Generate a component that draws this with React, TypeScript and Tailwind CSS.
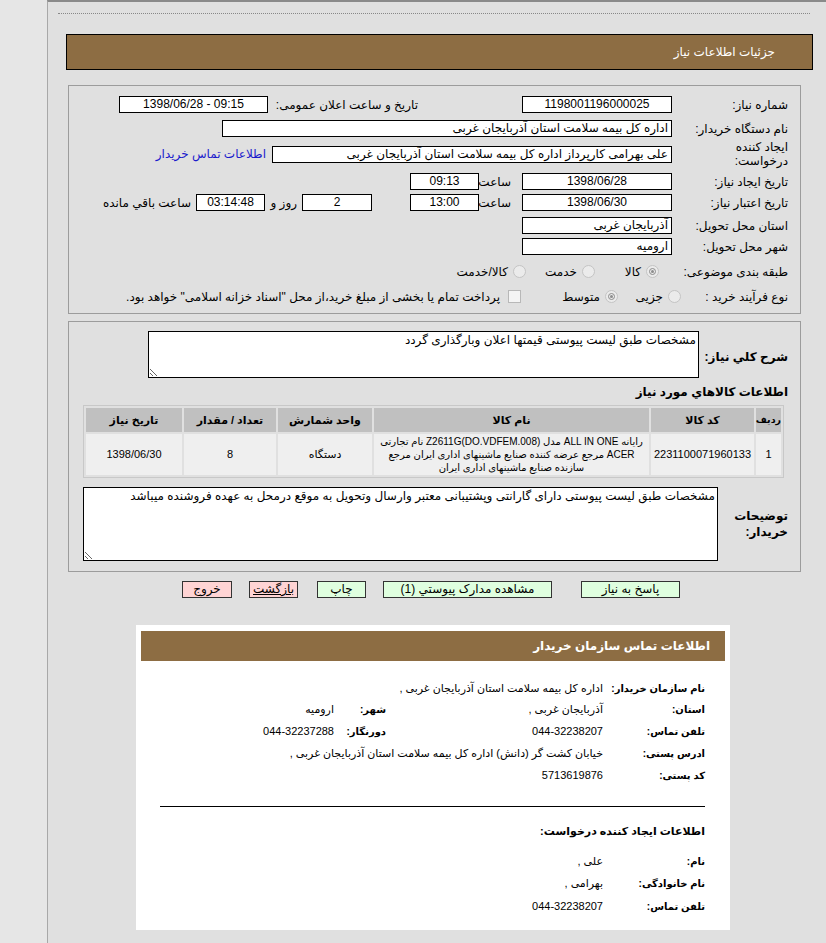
import React from 'react';

const Box: React.FC<{ className?: string; dir?: string; children?: React.ReactNode }> = ({ className = '', dir, children }) => (
  <div dir={dir} className={`h-[17px] shrink-0 bg-white border border-black text-[12px] leading-[15px] px-[3px] whitespace-nowrap overflow-hidden ${className}`}>
    {children}
  </div>
);

const Radio: React.FC<{ checked?: boolean }> = ({ checked }) => (
  <span className="w-[13px] h-[13px] shrink-0 rounded-full border border-[#c4c4c4] bg-[#ebebeb] flex items-center justify-center">
    {checked && (
      <span className="w-[7px] h-[7px] rounded-full border border-[#8c8c8c] flex items-center justify-center">
        <span className="w-[3px] h-[3px] rounded-full bg-[#8c8c8c]" />
      </span>
    )}
  </span>
);

const Btn: React.FC<{ className?: string; children: React.ReactNode }> = ({ className = '', children }) => (
  <div className={`h-[17px] shrink-0 border border-[#333] text-[12px] leading-[15px] text-center whitespace-nowrap ${className}`}>{children}</div>
);

const CardRow: React.FC<{ className?: string; children: React.ReactNode }> = ({ className = '', children }) => (
  <div className={`flex items-center h-[18px] whitespace-nowrap ${className}`}>{children}</div>
);

const CardLabel: React.FC<{ children: React.ReactNode }> = ({ children }) => (
  <span className="w-[102px] shrink-0 font-bold text-[10px]">{children}</span>
);

const App: React.FC = () => {
  return (
    <div className="flex min-h-[943px] font-['Liberation_Sans','DejaVu_Sans',sans-serif] text-black">
      {/* left strip */}
      <div className="w-[47px] shrink-0 bg-[#e6e6e6]" />

      <div className="flex-1 bg-[#e0e0e0] border-l border-t-2 border-l-[#a8a8a8] border-t-[#8a8a8a]">
        {/* dotted rule */}
        <div className="mt-[11px] ml-[10px] mr-[16px] border-t border-dotted border-[#888]" />

        {/* page title */}
        <div dir="rtl" className="mt-[20px] ml-[18px] w-[747px] h-[36px] bg-[#8d6d43] border border-black flex items-center pr-[37px] text-white text-[12px]">
          جزئیات اطلاعات نیاز
        </div>

        {/* main form */}
        <div dir="rtl" className="mt-[15px] ml-[20px] w-[733px] h-[229px] border border-[#9c9c9c] pr-[12px] text-[12px]">
          <div className="flex items-center h-[17px] mt-[10px]">
            <span className="w-[116px] shrink-0">شماره نیاز:</span>
            <Box className="w-[150px] text-center">1198001196000025</Box>
            <span className="mr-[104px] w-[150px] shrink-0">تاریخ و ساعت اعلان عمومی:</span>
            <Box dir="rtl" className="w-[149px] text-center">
              <span dir="ltr">1398/06/28 - 09:15</span>
            </Box>
          </div>

          <div className="flex items-center h-[17px] mt-[7px]">
            <span className="w-[116px] shrink-0">نام دستگاه خریدار:</span>
            <Box className="w-[450px]">اداره کل بیمه سلامت استان آذربایجان غربی</Box>
          </div>

          <div className="flex items-center h-[28px] mt-[3px]">
            <span className="w-[116px] shrink-0 leading-[14px]">
              ایجاد کننده
              <br />
              درخواست:
            </span>
            <Box className="w-[400px]">علی بهرامی کارپرداز اداره کل بیمه سلامت استان آذربایجان غربی</Box>
            <a className="mr-[6px] text-[#1a1acc]">اطلاعات تماس خریدار</a>
          </div>

          <div className="flex items-center h-[17px] mt-[5px]">
            <span className="w-[116px] shrink-0">تاریخ ایجاد نیاز:</span>
            <Box className="w-[150px] text-center">1398/06/28</Box>
            <span className="mr-[11px] w-[32px] shrink-0">ساعت</span>
            <Box className="w-[69px] text-center">09:13</Box>
          </div>

          <div className="flex items-center h-[17px] mt-[4px]">
            <span className="w-[116px] shrink-0">تاریخ اعتبار نیاز:</span>
            <Box className="w-[150px] text-center">1398/06/30</Box>
            <span className="mr-[11px] w-[32px] shrink-0">ساعت</span>
            <Box className="w-[69px] text-center">13:00</Box>
            <Box className="mr-[38px] w-[70px] text-center">2</Box>
            <span className="mr-[5px] w-[32px] shrink-0">روز و</span>
            <Box className="w-[69px] text-center bg-[#efeec8] border-[#555]">03:14:48</Box>
            <span className="mr-[5px]">ساعت باقي مانده</span>
          </div>

          <div className="flex items-center h-[17px] mt-[6px]">
            <span className="w-[116px] shrink-0">استان محل تحویل:</span>
            <Box className="w-[150px]">آذربایجان غربی</Box>
          </div>

          <div className="flex items-center h-[17px] mt-[4px]">
            <span className="w-[116px] shrink-0">شهر محل تحویل:</span>
            <Box className="w-[150px]">ارومیه</Box>
          </div>

          <div className="flex items-center h-[17px] mt-[8px]">
            <span className="w-[116px] shrink-0">طبقه بندی موضوعی:</span>
            <div className="w-[77px] shrink-0 flex items-center">
              <span className="mr-[13px]"><Radio checked /></span>
              <span className="mr-[5px]">کالا</span>
            </div>
            <div className="w-[69px] shrink-0 flex items-center">
              <Radio />
              <span className="mr-[5px]">خدمت</span>
            </div>
            <div className="flex items-center">
              <Radio />
              <span className="mr-[5px]">کالا/خدمت</span>
            </div>
          </div>

          <div className="flex items-center h-[17px] mt-[8px]">
            <span className="w-[107px] shrink-0">نوع فرآیند خرید :</span>
            <div className="w-[63px] shrink-0 flex items-center">
              <Radio />
              <span className="mr-[5px]">جزیی</span>
            </div>
            <div className="w-[97px] shrink-0 flex items-center">
              <Radio checked />
              <span className="mr-[5px]">متوسط</span>
            </div>
            <span className="w-[13px] h-[13px] shrink-0 border border-[#b8b8b8] bg-[#f4f4f4]" />
            <span className="mr-[8px] whitespace-nowrap">پرداخت تمام یا بخشی از مبلغ خرید،از محل "اسناد خزانه اسلامی" خواهد بود.</span>
          </div>
        </div>

        {/* description + items */}
        <div dir="rtl" className="mt-[7px] ml-[20px] w-[733px] h-[251px] border border-[#9c9c9c] pr-[12px] text-[12px]">
          <div className="flex items-center mt-[9px]">
            <span className="w-[89px] shrink-0 font-bold text-[12px] whitespace-nowrap pt-[4px]">شرح کلي نیاز:</span>
            <textarea
              readOnly
              dir="rtl"
              className="w-[551px] h-[47px] bg-white border border-black text-[12px] leading-[15px] px-[2px] py-[1px] outline-none resize"
              defaultValue="مشخصات طبق لیست پیوستی قیمتها اعلان وبارگذاری گردد"
            />
          </div>

          <div className="mt-[7px] h-[14px] leading-[14px] font-bold text-[12px]">اطلاعات کالاهاي مورد نیاز</div>

          <div className="mt-[6px] mr-[4px] w-[701px]">
            <table className="w-full table-fixed border border-[#c8c8c8] border-separate border-spacing-[2px] text-[11px]">
              <colgroup>
                <col className="w-[25px]" />
                <col className="w-[103px]" />
                <col className="w-[275px]" />
                <col className="w-[94px]" />
                <col className="w-[92px]" />
                <col className="w-[96px]" />
              </colgroup>
              <thead>
                <tr className="h-[24px] bg-[#c0c0c0] font-bold">
                  <th className="whitespace-nowrap text-[9.5px] tracking-[-0.3px]">ردیف</th>
                  <th>کد کالا</th>
                  <th>نام کالا</th>
                  <th>واحد شمارش</th>
                  <th>تعداد / مقدار</th>
                  <th>تاریخ نیاز</th>
                </tr>
              </thead>
              <tbody>
                <tr className="h-[41px] bg-[#efefef] text-center">
                  <td>1</td>
                  <td>2231100071960133</td>
                  <td className="leading-[13px] text-[10px]">
                    رایانه ALL IN ONE مدل Z2611G(DO.VDFEM.008) نام تجارتی ACER مرجع عرضه کننده صنایع ماشینهای اداری ایران مرجع سازنده صنایع ماشینهای اداری ایران
                  </td>
                  <td>دستگاه</td>
                  <td>8</td>
                  <td>1398/06/30</td>
                </tr>
              </tbody>
            </table>
          </div>

          <div className="flex items-center mt-[9px]">
            <span className="w-[70px] shrink-0 font-bold text-[12px] leading-[16px]">
              توضیحات
              <br />
              خریدار:
            </span>
            <textarea
              readOnly
              dir="rtl"
              className="w-[635px] h-[74px] bg-white border border-black text-[12px] leading-[15px] px-[2px] py-[1px] outline-none"
              defaultValue="مشخصات طبق لیست پیوستی دارای گارانتی وپشتیبانی معتبر وارسال وتحویل به موقع درمحل به عهده فروشنده میباشد"
            />
          </div>
        </div>

        {/* actions */}
        <div dir="rtl" className="mt-[9px] pr-[146px] flex items-center">
          <Btn className="w-[99px] bg-[#dfffdf]">پاسخ به نیاز</Btn>
          <Btn className="mr-[29px] w-[169px] bg-[#dfffdf]">مشاهده مدارک پیوستي (1)</Btn>
          <Btn className="mr-[17px] w-[49px] bg-[#dfffdf]">چاپ</Btn>
          <Btn className="mr-[19px] w-[49px] bg-[#ffd4d4] underline">بازگشت</Btn>
          <Btn className="mr-[17px] w-[50px] bg-[#ffd4d4]">خروج</Btn>
        </div>

        {/* buyer contact card */}
        <div dir="rtl" className="mt-[27px] ml-[88px] w-[594px] h-[305px] bg-white pt-[6px] text-[11px]">
          <div className="mx-[5px] h-[30px] bg-[#8d6d43] flex items-center pr-[15px] text-white font-bold text-[12px]">
            اطلاعات تماس سازمان خریدار
          </div>

          <div className="pr-[25px]">
            <CardRow className="mt-[18px]">
              <CardLabel>نام سازمان خریدار:</CardLabel>
              <span>اداره کل بیمه سلامت استان آذربایجان غربی ,</span>
            </CardRow>
            <CardRow className="mt-[3px]">
              <CardLabel>استان:</CardLabel>
              <span className="w-[217px] shrink-0">آذربایجان غربی ,</span>
              <span className="w-[52px] shrink-0 font-bold text-[10px]">شهر:</span>
              <span>ارومیه</span>
            </CardRow>
            <CardRow className="mt-[4px]">
              <CardLabel>تلفن تماس:</CardLabel>
              <span className="w-[217px] shrink-0">044-32238207</span>
              <span className="w-[52px] shrink-0 font-bold text-[10px]">دورنگار:</span>
              <span>044-32237288</span>
            </CardRow>
            <CardRow className="mt-[4px]">
              <CardLabel>ادرس پستی:</CardLabel>
              <span>خیابان کشت گر (دانش) اداره کل بیمه سلامت استان آذربایجان غربی ,</span>
            </CardRow>
            <CardRow className="mt-[4px]">
              <CardLabel>کد پستی:</CardLabel>
              <span>5713619876</span>
            </CardRow>
          </div>

          <div className="mt-[22px] mr-[25px] ml-[24px] border-t border-black" />

          <div className="pr-[25px]">
            <CardRow className="mt-[15px] font-bold">اطلاعات ایجاد کننده درخواست:</CardRow>
            <CardRow className="mt-[12px]">
              <CardLabel>نام:</CardLabel>
              <span>علی ,</span>
            </CardRow>
            <CardRow className="mt-[4px]">
              <CardLabel>نام خانوادگی:</CardLabel>
              <span>بهرامی ,</span>
            </CardRow>
            <CardRow className="mt-[5px]">
              <CardLabel>تلفن تماس:</CardLabel>
              <span>044-32238207</span>
            </CardRow>
          </div>
        </div>
      </div>
    </div>
  );
};

export default App;
